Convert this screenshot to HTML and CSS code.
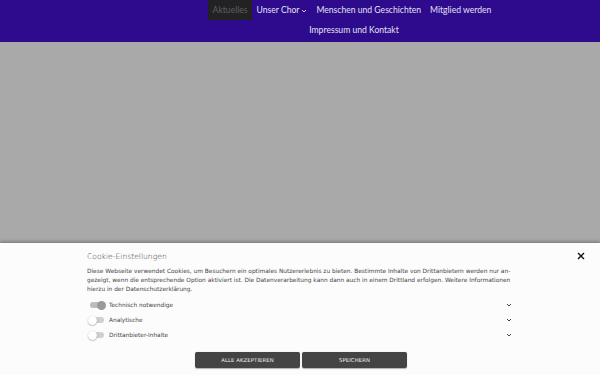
FILE: index.html
```html
<!DOCTYPE html>
<html lang="de">
<head>
<meta charset="utf-8">
<link rel="stylesheet" href="styles.css">
</head>
<body>
<header class="header">
  <nav class="nav">
    <div class="nav-row">
      <a class="nav-item active">Aktuelles</a>
      <a class="nav-item">Unser Chor <svg class="caret" width="6" height="4" viewBox="0 0 6 4"><path d="M1 1 L3 3 L5 1" fill="none" stroke="currentColor" stroke-width="0.9"/></svg></a>
      <a class="nav-item">Menschen und Geschichten</a>
      <a class="nav-item">Mitglied werden</a>
    </div>
    <div class="nav-row">
      <a class="nav-item">Impressum und Kontakt</a>
    </div>
  </nav>
</header>
<main class="hero"></main>
<section class="cookie">
  <div class="cookie-inner">
    <div class="cookie-head">
      <h2 class="cookie-title">Cookie-Einstellungen</h2>
      <svg class="close" width="8" height="8" viewBox="0 0 8 8"><path d="M1 1 L7 7 M7 1 L1 7" stroke="#111" stroke-width="1.4"/></svg>
    </div>
    <p class="cookie-text">Diese Webseite verwendet Cookies, um Besuchern ein optimales Nutzererlebnis zu bieten. Bestimmte Inhalte von Drittanbietern werden nur an-<br>gezeigt, wenn die entsprechende Option aktiviert ist. Die Datenverarbeitung kann dann auch in einem Drittland erfolgen. Weitere Informationen hierzu in der Datenschutzerklärung.</p>
    <ul class="options">
      <li class="option"><span class="toggle on"><span class="knob"></span></span><span class="label">Technisch notwendige</span><svg class="chev" width="6" height="4" viewBox="0 0 6 4"><path d="M1 1 L3 3 L5 1" fill="none" stroke="#444" stroke-width="1"/></svg></li>
      <li class="option"><span class="toggle"><span class="knob"></span></span><span class="label">Analytische</span><svg class="chev" width="6" height="4" viewBox="0 0 6 4"><path d="M1 1 L3 3 L5 1" fill="none" stroke="#444" stroke-width="1"/></svg></li>
      <li class="option"><span class="toggle"><span class="knob"></span></span><span class="label">Drittanbieter-Inhalte</span><svg class="chev" width="6" height="4" viewBox="0 0 6 4"><path d="M1 1 L3 3 L5 1" fill="none" stroke="#444" stroke-width="1"/></svg></li>
    </ul>
    <div class="buttons">
      <button class="btn">ALLE AKZEPTIEREN</button>
      <button class="btn">SPEICHERN</button>
    </div>
  </div>
</section>
</body>
</html>
```

FILE: styles.css
```css
* { box-sizing: border-box; }
html, body { margin: 0; padding: 0; }
body { width: 600px; height: 375px; overflow: hidden; background: #a9a9a9; font-family: "DejaVu Sans", sans-serif; }
.header { background: #2d0b8c; height: 42px; }
.nav { display: flex; flex-direction: column; padding-left: 104px; }
.nav-row { display: flex; justify-content: center; }
.nav-row + .nav-row { padding-left: 4px; }
.nav-item { font-family: "Lato", sans-serif; font-size: 8.6px; color: #e4e0f4; height: 20px; line-height: 20px; padding: 0 4.5px; display: flex; align-items: center; gap: 2px; }
.nav-item.active { background: #222222; color: #5e5e68; }
.caret { margin-top: 1px; }
.hero { height: 201px; background: #a9a9a9; }
.cookie { background: #fcfcfc; height: 132px; box-shadow: 0 -1px 4px rgba(0,0,0,0.35); }
.cookie-inner { padding: 7px 15px 0 87px; }
.cookie-head { display: flex; justify-content: space-between; align-items: center; height: 12px; }
.cookie-title { margin: 0; font-size: 7.6px; font-weight: 300; color: #333; }
.cookie-text { margin: 4.5px 0 0; font-size: 5.85px; line-height: 9px; color: #444; width: 440px; }
.options { list-style: none; margin: 4px 0 0; padding: 0; width: 425px; }
.option { display: flex; align-items: center; height: 15px; font-size: 5.8px; color: #444; }
.toggle { width: 14px; height: 6px; border-radius: 3px; background: #d0d0d0; position: relative; margin-left: 3px; margin-right: 5px; }
.knob { position: absolute; left: -2px; top: -1.5px; width: 9px; height: 9px; border-radius: 50%; background: #fff; box-shadow: 0 0.5px 1.5px rgba(0,0,0,0.4); }
.toggle.on { background: #bdbdbd; }
.toggle.on .knob { left: auto; right: -2px; background: #9a9a9a; box-shadow: none; }
.label { flex: 1; }
.buttons { display: flex; gap: 2px; margin: 9.5px 0 0 108px; }
.btn { width: 105px; height: 16px; background: #444444; color: #eee; border: none; border-radius: 2px; font-family: "DejaVu Sans", sans-serif; font-size: 5.3px; letter-spacing: 0.1px; padding: 0; box-shadow: 0 0.5px 1px rgba(0,0,0,0.3); }
```
